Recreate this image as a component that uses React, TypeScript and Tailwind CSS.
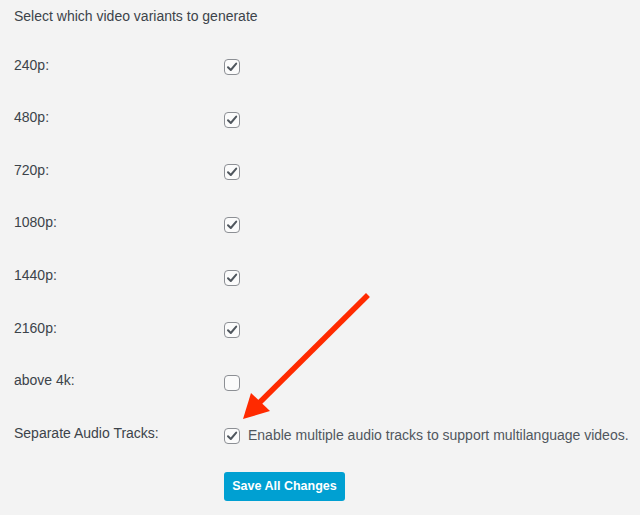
const variants = [
  { label: '240p:', checked: true },
  { label: '480p:', checked: true },
  { label: '720p:', checked: true },
  { label: '1080p:', checked: true },
  { label: '1440p:', checked: true },
  { label: '2160p:', checked: true },
  { label: 'above 4k:', checked: false },
];

const Checkbox = ({ checked }: { checked: boolean }) => (
  <span className="flex h-[16px] w-[16px] shrink-0 items-center justify-center rounded-[4px] border border-[#8c8f94] bg-[#fbfbfb]">
    {checked && (
      <svg width="12" height="12" viewBox="0 0 12 12">
        <path d="M2 6.2 L4.8 9 L10.2 2.6" fill="none" stroke="#50575e" strokeWidth="2" strokeLinecap="round" strokeLinejoin="round" />
      </svg>
    )}
  </span>
);

const App = () => {
  return (
    <div
      className="relative h-[515px] w-[640px] overflow-hidden bg-[#f3f3f3] text-[14px] text-[#3c434a]"
      style={{ fontFamily: '"Liberation Sans", Arial, sans-serif' }}
    >
      <div className="px-[14px] pt-[6px]">
        <p className="leading-[20px]">Select which video variants to generate</p>

        <div className="mt-[14.7px]">
          {variants.map((v) => (
            <div key={v.label} className="flex h-[52.67px] items-center">
              <span className="mb-[4px] w-[210px] shrink-0">{v.label}</span>
              <Checkbox checked={v.checked} />
            </div>
          ))}
          <div className="flex h-[52.67px] items-center whitespace-nowrap">
            <span className="mb-[4px] w-[210px] shrink-0">Separate Audio Tracks:</span>
            <Checkbox checked />
            <span className="ml-[8px] text-[#50575e]">Enable multiple audio tracks to support multilanguage videos.</span>
          </div>
        </div>

        <div className="ml-[210px] mt-[9.7px]">
          <button className="h-[29px] w-[121px] rounded-[3px] bg-[#00a0d2] text-[12.5px] font-bold text-white">
            Save All Changes
          </button>
        </div>
      </div>

      <svg className="pointer-events-none absolute left-0 top-0" width="640" height="515" viewBox="0 0 640 515">
        <line x1="366" y1="297" x2="258" y2="404" stroke="#ff2a00" strokeWidth="5.5" strokeLinecap="square" />
        <polygon points="243,419 251,393 270,411" fill="#ff2a00" />
      </svg>
    </div>
  );
};

export default App;
